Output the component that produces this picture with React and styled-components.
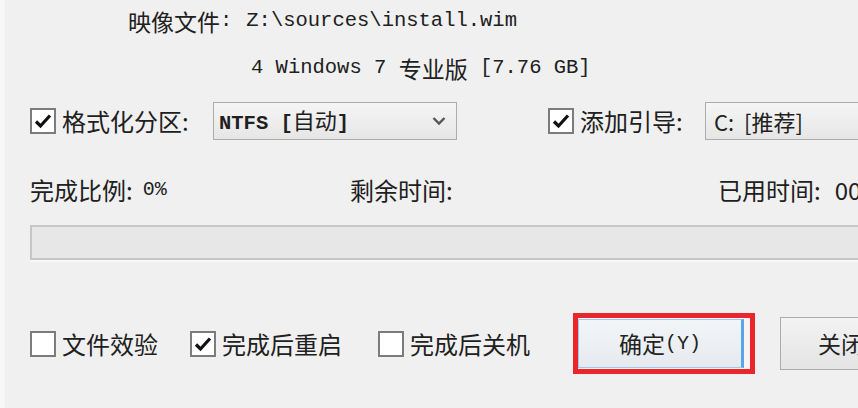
import React from 'react';
import styled, { createGlobalStyle } from 'styled-components';

const Global = createGlobalStyle`
  html, body { margin: 0; padding: 0; background: #f0f0f0; }
  body { font-family: "Noto Sans CJK SC", "Liberation Sans", sans-serif; }
`;

const Window = styled.div`
  width: 858px;
  height: 408px;
  overflow: hidden;
  box-sizing: border-box;
  background: #f0f0f0;
  border-left: 5px solid #f7f7f7;
  padding-left: 25px;
  color: #202020;
  font-family: "Noto Sans CJK SC", "Liberation Sans", sans-serif;
  display: flex;
  flex-direction: column;
`;

const InfoLine = styled.div`
  height: ${p => p.$height}px;
  margin-left: ${p => p.$indent}px;
  display: flex;
  align-items: center;
  white-space: pre;
  font-size: 23px;
  line-height: 1;
`;

const Mono = styled.span`
  font-family: "Liberation Mono", monospace;
  font-size: ${p => p.$size || 20.5}px;
  font-weight: ${p => (p.$bold ? 700 : 400)};
  margin-left: ${p => p.$gap || 0}px;
  white-space: pre;
`;

const Value = styled.span`
  margin-left: ${p => p.$gap || 0}px;
`;

const OptionRow = styled.div`
  margin-top: 8px;
  height: 38px;
  display: flex;
  align-items: center;
  white-space: nowrap;
`;

const CheckField = styled.label`
  flex: none;
  width: ${p => p.$width}px;
  margin-left: ${p => p.$offset || 0}px;
  display: flex;
  align-items: center;
  gap: 6px;
  font-size: 24px;
  line-height: 1;
`;

const Box = styled.span`
  flex: none;
  width: 22px;
  height: 22px;
  border: 2px solid #7c7c7c;
  background: #fff;
  display: flex;
  align-items: center;
  justify-content: center;
`;

const Select = styled.div`
  flex: none;
  box-sizing: border-box;
  width: ${p => p.$width}px;
  height: 38px;
  border: 1px solid #acacac;
  background: linear-gradient(#f5f5f5, #e6e6e6);
  display: flex;
  align-items: center;
  justify-content: space-between;
  padding: 0 10px 0 ${p => p.$padLeft || 5}px;
  font-size: 22px;
  line-height: 1;
  white-space: pre;
`;

const StatsRow = styled.div`
  margin-top: 35px;
  height: 30px;
  display: flex;
  align-items: center;
  white-space: nowrap;
  font-size: 24px;
  line-height: 1;
`;

const Stat = styled.div`
  flex: none;
  width: ${p => p.$width}px;
  display: flex;
  align-items: center;
  white-space: pre;
`;

const Progress = styled.div`
  margin-top: 20px;
  height: 35px;
  width: 900px;
  box-sizing: border-box;
  border: 2px solid #c6c6c6;
  border-right: none;
  background: #e7e7e7;
  box-shadow: 0 2px 0 #f8f8f8;
`;

const BottomRow = styled.div`
  margin-top: 53px;
  height: 61px;
  display: flex;
  align-items: center;
  white-space: nowrap;
`;

const RedFrame = styled.div`
  flex: none;
  box-sizing: border-box;
  width: 182px;
  height: 61px;
  border: 5px solid #e8262c;
  padding: 1px 6px 1px 0;
  display: flex;
  background: #fbf3f3;
`;

const Button = styled.div`
  flex: ${p => (p.$grow ? 1 : 'none')};
  box-sizing: border-box;
  width: ${p => (p.$width ? `${p.$width}px` : 'auto')};
  height: ${p => (p.$height ? `${p.$height}px` : 'auto')};
  margin-left: ${p => p.$offset || 0}px;
  border: 1px solid ${p => (p.$focused ? '#9ec9ee' : '#acacac')};
  border-right: ${p => (p.$focused ? '3px solid #56a7e8' : '1px solid #acacac')};
  background: ${p => (p.$focused ? 'linear-gradient(#f2f5f8, #e6eaee)' : 'linear-gradient(#f3f3f3, #e4e4e4)')};
  display: flex;
  align-items: center;
  justify-content: ${p => (p.$focused ? 'center' : 'flex-start')};
  padding-left: ${p => p.$padLeft || 0}px;
  font-size: 23px;
  line-height: 1;
  color: #222;
`;

const Check = () => (
  <svg width="18" height="16" viewBox="0 0 18 16">
    <path d="M2 8.5 L6.5 13 L16 2.5" fill="none" stroke="#111" strokeWidth="3.2" strokeLinejoin="miter" />
  </svg>
);

const Chevron = () => (
  <svg width="14" height="10" viewBox="0 0 14 10">
    <path d="M1.5 2 L7 7.5 L12.5 2" fill="none" stroke="#555" strokeWidth="2.4" />
  </svg>
);

const Checkbox = ({ checked, label, width, offset }) => (
  <CheckField $width={width} $offset={offset}>
    <Box>{checked && <Check />}</Box>
    <span>{label}</span>
  </CheckField>
);

export default function App() {
  return (
    <>
      <Global />
      <Window>
        <InfoLine $height={42} $indent={98}>
          映像文件<Mono>:</Mono><Mono $gap={14}>{'Z:\\sources\\install.wim'}</Mono>
        </InfoLine>
        <InfoLine $height={52} $indent={221}>
          <Mono>{'4 Windows 7 '}</Mono>专业版<Mono>{' [7.76 GB]'}</Mono>
        </InfoLine>

        <OptionRow>
          <Checkbox checked label="格式化分区:" width={183} />
          <Select $width={244}>
            <span>
              <Mono $bold>{'NTFS ['}</Mono>自动<Mono $bold>]</Mono>
            </span>
            <Chevron />
          </Select>
          <Checkbox checked label="添加引导:" width={157} offset={91} />
          <Select $width={200} $padLeft={8}>
            <span>{'C:  [推荐]'}</span>
          </Select>
        </OptionRow>

        <StatsRow>
          <Stat $width={320}>
            完成比例:<Mono $size={20} $gap={10}>0%</Mono>
          </Stat>
          <Stat $width={368}>剩余时间:</Stat>
          <Stat $width={200}>
            已用时间:<Value $gap={14}>00:00:00</Value>
          </Stat>
        </StatsRow>

        <Progress />

        <BottomRow>
          <Checkbox label="文件效验" width={160} />
          <Checkbox checked label="完成后重启" width={188} />
          <Checkbox label="完成后关机" width={195} />
          <RedFrame>
            <Button $focused $grow>
              确定<Mono $size={20}>(Y)</Mono>
            </Button>
          </RedFrame>
          <Button $width={120} $height={53} $offset={25} $padLeft={37}>
            关闭
          </Button>
        </BottomRow>
      </Window>
    </>
  );
}
